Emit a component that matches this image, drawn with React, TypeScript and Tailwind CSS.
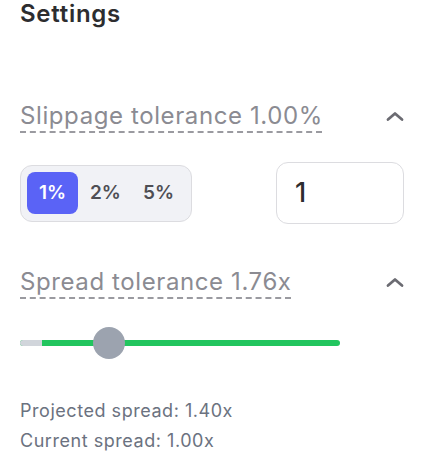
function Chevron() {
  return (
    <svg width="18" height="11" viewBox="0 0 18 11" fill="none" stroke="#6b6b72" strokeWidth={2.8} strokeLinecap="round" strokeLinejoin="round">
      <polyline points="2,8.5 9,2.5 16,8.5" />
    </svg>
  );
}

export default function App() {
  return (
    <div className="w-[426px] h-[476px] bg-white pl-5 pr-[22px] font-['Inter',sans-serif]">
      <h2 className="text-[24px] leading-[28px] font-semibold tracking-[0.03em] text-[#2d2d2f]">Settings</h2>

      <div className="mt-[73px] flex items-center justify-between">
        <span className="text-[24px] leading-[30px] tracking-[0.025em] text-[#8b8b92] underline decoration-dashed decoration-[#9a9aa0] decoration-2 underline-offset-[7px]">
          Slippage tolerance 1.00%
        </span>
        <Chevron />
      </div>

      <div className="mt-[31px] flex items-center justify-between">
        <div className="flex items-center gap-[2px] px-[6px] w-[172px] h-[57px] rounded-xl border border-[#dcdce0] bg-[#f1f2f6]">
          <button className="w-[51px] h-[42px] rounded-lg bg-[#5a63f6] text-white text-[19px] font-semibold">1%</button>
          <button className="w-[51px] h-[42px] rounded-lg text-[#4e4e54] text-[19px] font-semibold">2%</button>
          <button className="w-[51px] h-[42px] rounded-lg text-[#4e4e54] text-[19px] font-semibold">5%</button>
        </div>
        <div className="w-[128px] h-[62px] rounded-xl border border-[#dcdce0] flex items-center pl-[18px] text-[27px] font-medium text-[#2d2d2f]">
          1
        </div>
      </div>

      <div className="mt-[43px] flex items-center justify-between">
        <span className="text-[24px] leading-[30px] tracking-[0.025em] text-[#8b8b92] underline decoration-dashed decoration-[#9a9aa0] decoration-2 underline-offset-[7px]">
          Spread tolerance 1.76x
        </span>
        <Chevron />
      </div>

      <div className="mt-[30px] relative w-[320px] h-[32px] flex items-center">
        <div className="w-full h-[6px] rounded-full bg-[#22c55e] flex">
          <div className="w-[22px] h-full rounded-l-full bg-[#d1d5db]" />
        </div>
        <div className="absolute left-[73px] top-0 w-[32px] h-[32px] rounded-full bg-[#9ca3af]" />
      </div>

      <div className="mt-[37px] text-[18px] leading-[30px] tracking-[0.03em] text-[#6b7280]">
        <p>Projected spread: 1.40x</p>
        <p>Current spread: 1.00x</p>
      </div>
    </div>
  );
}
